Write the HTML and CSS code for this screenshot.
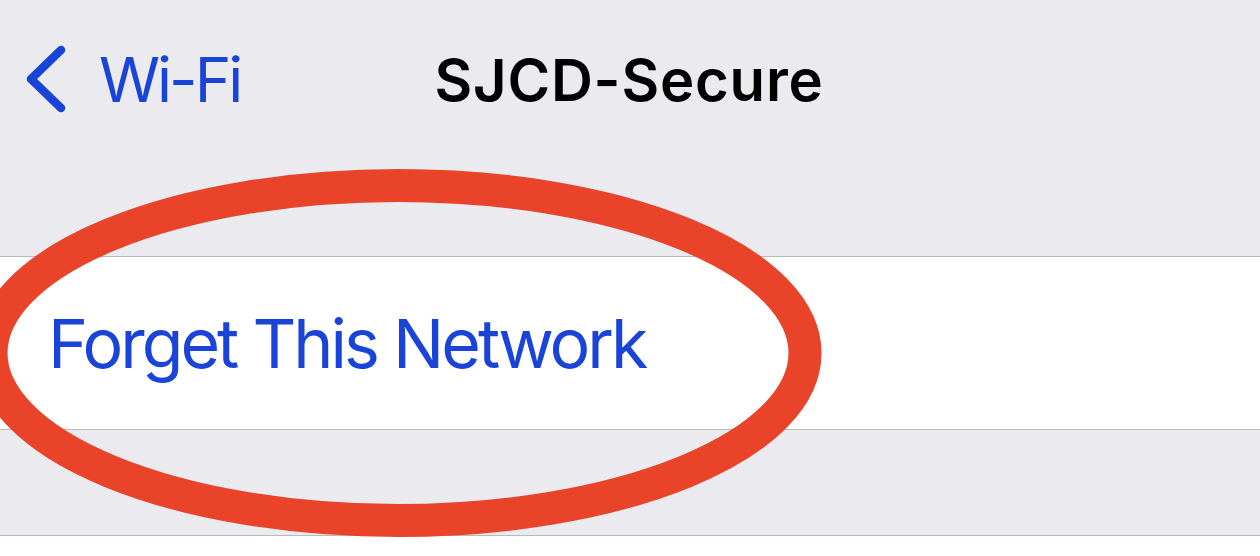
FILE: index.html
```html
<!DOCTYPE html>
<html lang="en">
<head>
  <meta charset="UTF-8">
  <meta name="viewport" content="width=device-width, initial-scale=1.0">
  <title>SJCD-Secure</title>
  <link rel="stylesheet" href="styles.css">
</head>
<body>
  <div class="screen">
    <header class="nav-bar">
      <a class="back-link" href="#">
        <svg class="chevron" width="46" height="80" viewBox="0 0 46 80">
          <path d="M38 10 L8 39 L38 68" fill="none" stroke="currentColor" stroke-width="8.5" stroke-linecap="round" stroke-linejoin="round"/>
        </svg>
        <span>Wi-Fi</span>
      </a>
      <h1 class="nav-title">SJCD-Secure</h1>
      <div class="nav-spacer"></div>
    </header>

    <div class="group">
      <a class="row-action" href="#">Forget This Network</a>
    </div>

    <div class="group group-next"></div>

    <!-- annotation drawn over the screenshot -->
    <svg class="markup" width="1260" height="556" viewBox="0 0 1260 556">
      <ellipse cx="398" cy="353" rx="407" ry="167.5" fill="none" stroke="#e9432a" stroke-width="33"/>
    </svg>
  </div>
</body>
</html>
```

FILE: styles.css
```css
body {
  margin: 0;
  background-color: #eaeaef;
  font-family: Inter, 'Noto Sans', 'Liberation Sans', sans-serif;
  overflow: hidden;
}

.screen {
  position: relative;
  width: 1260px;
  height: 556px;
  overflow: hidden;
}

.nav-bar {
  display: grid;
  grid-template-columns: 1fr auto 1fr;
  align-items: center;
  height: 160px;
}

.back-link {
  display: flex;
  align-items: center;
  gap: 30px;
  margin-left: 23px;
  color: #1a44d8;
  text-decoration: none;
  font-size: 62px;
  line-height: 62px;
  letter-spacing: -3px;
}

.chevron {
  flex-shrink: 0;
}

.nav-title {
  margin: 0 0 0 -2px;
  font-size: 58px;
  line-height: 58px;
  font-weight: 600;
  color: #000;
  letter-spacing: 0.8px;
}

.group {
  margin-top: 96px;
  background-color: #fff;
  border-top: 1px solid #b9b9be;
  border-bottom: 1px solid #b9b9be;
}

.row-action {
  display: block;
  padding: 52px 0 52px 48px;
  font-size: 68px;
  line-height: 68px;
  color: #1a44d8;
  text-decoration: none;
  letter-spacing: -3px;
}

.group-next {
  margin-top: 105px;
  height: 40px;
  border-bottom: none;
}

.markup {
  position: absolute;
  top: 0;
  left: 0;
  pointer-events: none;
}
```
